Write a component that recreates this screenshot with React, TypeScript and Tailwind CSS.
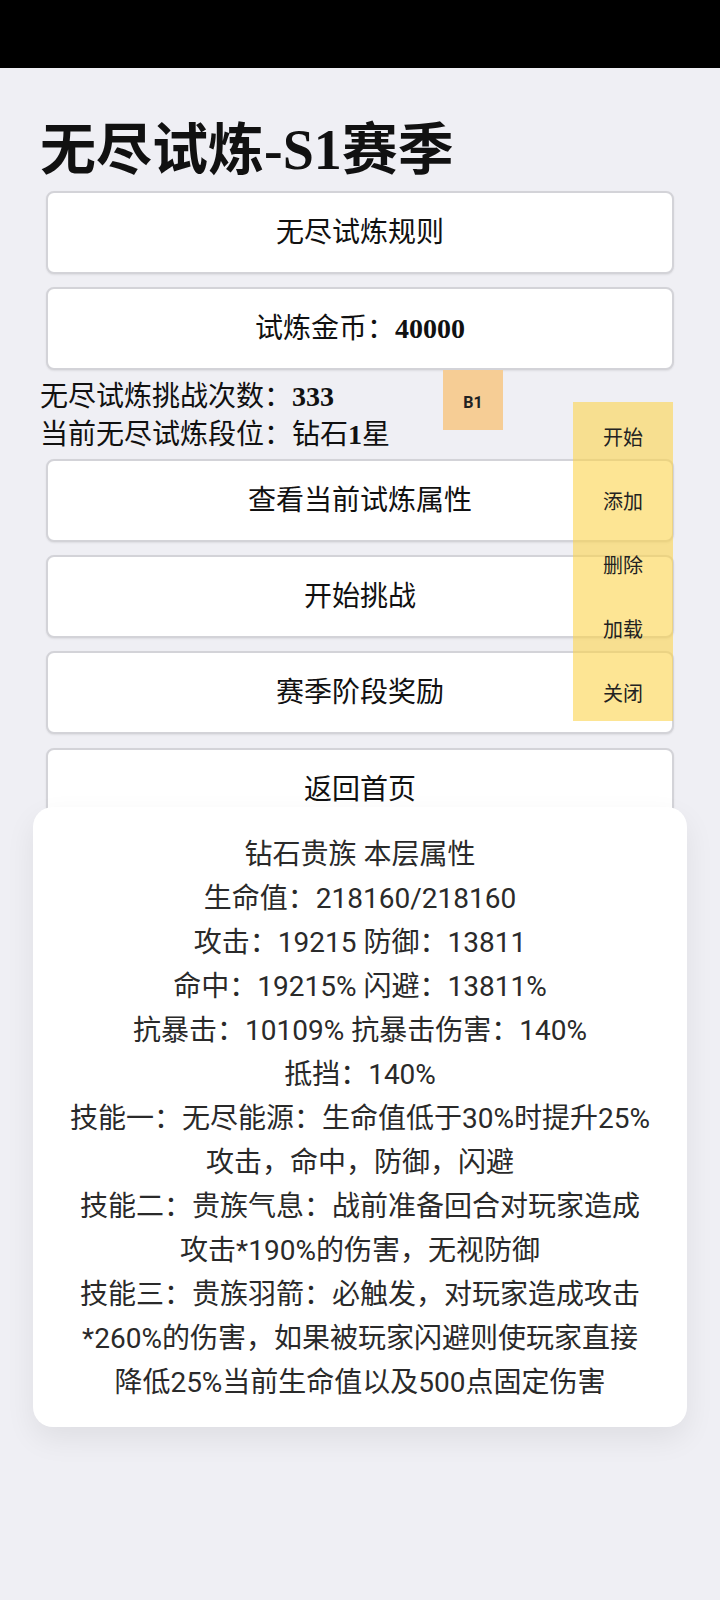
const serif = "font-['Liberation_Serif','Noto_Sans_CJK_SC',serif]";

function MenuButton({ children, className = "" }: { children: React.ReactNode; className?: string }) {
  return (
    <div
      className={`mx-[6px] flex h-[83px] items-center justify-center rounded-[8px] border-2 border-[#d3d3d8] bg-white text-[28px] font-normal text-[#111] shadow-[0_1px_2px_rgba(0,0,0,0.08)] ${className}`}
    >
      {children}
    </div>
  );
}

const toolItems = ["开始", "添加", "删除", "加载", "关闭"];

const statLines = [
  "钻石贵族 本层属性",
  "生命值：218160/218160",
  "攻击：19215 防御：13811",
  "命中：19215% 闪避：13811%",
  "抗暴击：10109% 抗暴击伤害：140%",
  "抵挡：140%",
  "技能一：无尽能源：生命值低于30%时提升25%",
  "攻击，命中，防御，闪避",
  "技能二：贵族气息：战前准备回合对玩家造成",
  "攻击*190%的伤害，无视防御",
  "技能三：贵族羽箭：必触发，对玩家造成攻击",
  "*260%的伤害，如果被玩家闪避则使玩家直接",
  "降低25%当前生命值以及500点固定伤害",
];

export default function App() {
  return (
    <div className={`relative min-h-[1600px] w-[720px] bg-[#efeff4] ${serif}`}>
      <div className="h-[68px] bg-black" />

      <div className="px-[40px]">
        <h1 className="mt-[52px] h-[60px] text-[56px] leading-[60px] font-bold text-[#111]">
          无尽试炼-S1赛季
        </h1>

        <MenuButton className="mt-[11px]">无尽试炼规则</MenuButton>
        <MenuButton className="mt-[13px]">
          试炼金币：<span className="font-bold">40000</span>
        </MenuButton>

        <div className="mt-[8px] text-[28px] leading-[38px] text-[#111]">
          <div>
            无尽试炼挑战次数：<span className="font-bold">333</span>
          </div>
          <div>
            当前无尽试炼段位：钻石<span className="font-bold">1</span>星
          </div>
        </div>

        <MenuButton className="mt-[5px]">查看当前试炼属性</MenuButton>
        <MenuButton className="mt-[13px]">开始挑战</MenuButton>
        <MenuButton className="mt-[13px]">赛季阶段奖励</MenuButton>
        <MenuButton className="mt-[14px]">返回首页</MenuButton>
      </div>

      {/* debug badge */}
      <div className="absolute left-[443px] top-[370px] flex h-[60px] w-[60px] items-center justify-center bg-[#f6cd95] pt-[5px] font-['Roboto',sans-serif] text-[16px] font-bold text-[#222]">
        B1
      </div>

      {/* floating tool panel */}
      <div className="absolute left-[573px] top-[402px] z-10 flex h-[319px] w-[100px] flex-col overflow-hidden bg-[rgba(252,211,77,0.6)] pt-[3px]">
        {toolItems.map((t) => (
          <div
            key={t}
            className="flex h-[64px] shrink-0 items-center justify-center font-['Noto_Sans_CJK_SC',sans-serif] text-[20px] text-[#222]"
          >
            {t}
          </div>
        ))}
      </div>

      {/* attribute popup */}
      <div className="absolute left-[33px] top-[807px] z-20 w-[654px] rounded-[20px] bg-white pt-[26px] pb-[22px] text-center font-['Roboto','Noto_Sans_CJK_SC',sans-serif] text-[28px] leading-[44px] text-[#2a2a2a] shadow-[0_12px_30px_rgba(0,0,0,0.07)]">
        {statLines.map((line) => (
          <div key={line} className="whitespace-nowrap">
            {line}
          </div>
        ))}
      </div>
    </div>
  );
}
